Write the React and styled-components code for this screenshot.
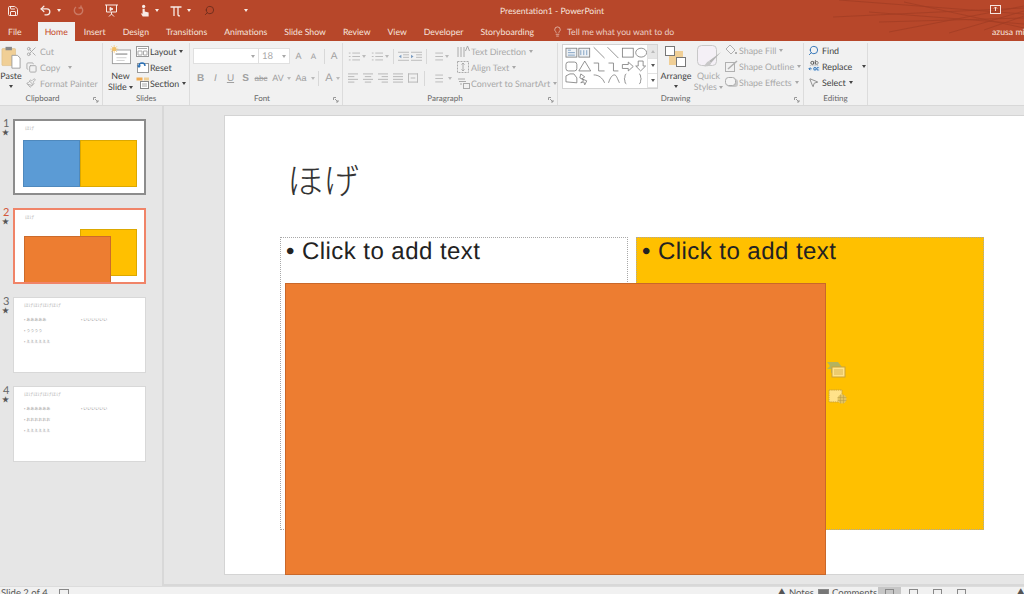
import React from 'react';
import styled, { createGlobalStyle } from 'styled-components';
import { Copy, Lightbulb, MousePointer2, Paintbrush, Save, Scissors, Search, Undo2 } from 'lucide-react';

const GlobalStyle = createGlobalStyle`
  html, body {
    margin: 0;
    width: 1024px;
    height: 594px;
    overflow: hidden;
    background: #e6e6e6;
    font-family: Lato, 'Noto Sans CJK JP', sans-serif;
    text-rendering: geometricPrecision;
  }
  * { box-sizing: border-box; }
`;

const Window = styled.div`
  width: 1024px;
  height: 594px;
  display: flex;
  flex-direction: column;
  overflow: hidden;
`;

// title bar + tabs
const Head = styled.div`
  position: relative;
  height: 41px;
  background: #b7472a;
  color: #f6e4de;
  flex: none;
`;

const Streaks = styled.svg`
  position: absolute;
  top: 0;
  right: 0;
`;

const TitleBar = styled.div`
  display: flex;
  align-items: center;
  height: 22px;
  padding: 0 0 1px 7px;
`;

const Qat = styled.div`
  display: flex;
  align-items: center;
  width: 493px;
  color: #f8ebe6;
`;

const QatSlot = styled.span`
  display: flex;
  align-items: center;
  width: ${(p) => p.$w}px;
  gap: 5px;
  color: ${(p) => p.$color || 'inherit'};
  opacity: ${(p) => (p.$off ? 0.3 : 1)};
`;

const Caret = styled.i`
  display: inline-block;
  flex: none;
  width: 0;
  height: 0;
  border-left: 2.5px solid transparent;
  border-right: 2.5px solid transparent;
  border-top: 3px solid currentColor;
  vertical-align: middle;
  margin-top: ${(p) => p.$top || 0}px;
`;

const DocTitle = styled.div`
  font-size: 8.6px;
  white-space: nowrap;
  flex: 1;
`;

const RestoreBtn = styled.svg`
  position: absolute;
  top: 4px;
  left: 990px;
`;

const Tabs = styled.div`
  display: flex;
  align-items: flex-end;
  height: 19px;
  padding-left: 8px;
  font-size: 8.7px;
  gap: 17px;
  white-space: nowrap;
`;

const Tab = styled.div`
  height: 19px;
  line-height: 20px;
  ${(p) => p.$active && `
    background: #f1f1f1;
    color: #c6492a;
    padding: 0 7px;
    margin: 0 -8px 0 -1px;
  `}
`;

const TellMe = styled.div`
  display: flex;
  align-items: center;
  gap: 4px;
  height: 19px;
  margin-left: 1px;
  color: #eccfc6;
`;

const User = styled.div`
  position: absolute;
  left: 992px;
  top: 22px;
  width: 32px;
  overflow: hidden;
  font-size: 8.7px;
  line-height: 20px;
  white-space: nowrap;
`;

// ribbon
const Ribbon = styled.div`
  display: flex;
  flex: none;
  height: 65px;
  background: #f1f1f1;
  border-bottom: 1px solid #d8d8d8;
  font-size: 8.9px;
  color: #a8a8a8;
  white-space: nowrap;
`;

const Group = styled.div`
  position: relative;
  flex: none;
  width: ${(p) => p.$w}px;
  display: flex;
  flex-direction: column;
  margin-top: 2px;
  border-right: 1px solid #dcdcdc;
`;

const GroupBody = styled.div`
  flex: 1;
  display: flex;
  padding-left: ${(p) => p.$pad || 0}px;
  gap: ${(p) => p.$gap || 0}px;
`;

const GroupLabel = styled.div`
  height: 13px;
  line-height: 13px;
  text-align: center;
  padding-right: ${(p) => p.$right || 0}px;
  font-size: 8px;
  color: #666;
`;

const Launcher = styled.svg`
  position: absolute;
  right: 3px;
  bottom: 2px;
`;

const BigButton = styled.div`
  width: ${(p) => p.$w}px;
  flex: none;
  display: flex;
  flex-direction: column;
  align-items: center;
  line-height: 11px;
  color: ${(p) => (p.$dim ? '#a8a8a8' : '#444')};
`;

const BigIcon = styled.div`
  height: ${(p) => p.$h}px;
  display: flex;
  align-items: flex-end;
  margin-bottom: 1px;
`;

const SmallCol = styled.div`
  display: flex;
  flex-direction: column;
  margin-top: ${(p) => p.$top ?? 0}px;
`;

const SmallBtn = styled.div`
  height: 16px;
  display: flex;
  align-items: center;
  gap: 3px;
  color: ${(p) => (p.$on ? '#444' : '#a8a8a8')};
`;

const IconBox = styled.span`
  width: 14px;
  margin-right: -3px;
  height: 14px;
  flex: none;
  display: flex;
  align-items: center;
  justify-content: flex-start;
`;

const FontCol = styled.div`
  display: flex;
  flex-direction: column;
  width: ${(p) => (p.$w ? `${p.$w}px` : 'auto')};
  flex: none;
  gap: 6px;
  padding-top: 5px;
`;

const Line = styled.div`
  display: flex;
  align-items: center;
  height: 16px;
  gap: ${(p) => p.$gap || 0}px;
`;

const Field = styled.div`
  width: ${(p) => p.$w}px;
  height: 16px;
  background: #fff;
  border: 1px solid #e0e0e0;
  display: flex;
  align-items: center;
  justify-content: space-between;
  padding: 0 3px;
  color: #a8a8a8;
  font-size: 9.5px;
`;

const Glyph = styled.span`
  width: ${(p) => p.$w}px;
  flex: none;
  text-align: center;
  font-size: ${(p) => p.$size || 10}px;
  font-weight: ${(p) => (p.$b ? 700 : 400)};
  font-style: ${(p) => (p.$i ? 'italic' : 'normal')};
  text-decoration: ${(p) => p.$deco || 'none'};
  color: #a0a0a0;
  font-family: 'Liberation Sans', sans-serif;
`;

const Sep = styled.span`
  width: 1px;
  height: 15px;
  flex: none;
  background: #d8d8d8;
  margin: 0 ${(p) => p.$m ?? 3}px;
`;

const Gallery = styled.div`
  display: flex;
  width: 96px;
  height: 45px;
  flex: none;
  margin-top: 1px;
  background: #fff;
  border: 1px solid #d2d2d2;
`;

const GalleryScroll = styled.div`
  width: 10px;
  margin-left: auto;
  display: flex;
  flex-direction: column;
  border-left: 1px solid #e2e2e2;
`;

const ScrollCell = styled.span`
  flex: 1;
  display: flex;
  align-items: center;
  justify-content: center;
  background: ${(p) => (p.$off ? '#e6e6e6' : '#fff')};
  color: ${(p) => (p.$off ? '#bbb' : '#555')};
  border-bottom: 1px solid #e2e2e2;
`;

// workspace
const Workspace = styled.div`
  flex: 1;
  min-height: 0;
  display: flex;
  background: #e6e6e6;
`;

const ThumbPane = styled.div`
  width: 164px;
  flex: none;
  border-right: 2px solid #d8d8d8;
  padding: 13px 0 0 3px;
  display: flex;
  flex-direction: column;
  gap: 13px;
`;

const ThumbRow = styled.div`
  display: flex;
`;

const ThumbMark = styled.div`
  width: 10px;
  flex: none;
  color: ${(p) => (p.$active ? '#d2573a' : '#666')};
  font-size: 11px;
  line-height: 9px;
  text-align: left;
`;

const Star = styled.div`
  font-size: 7px;
  line-height: 9px;
  margin: 1px 0 0 -1px;
  color: #555;
`;

const Thumb = styled.div`
  position: relative;
  width: 133px;
  height: 76px;
  background: #fff;
  border: ${(p) => p.$border};
  font-family: 'Noto Sans CJK JP', sans-serif;
  color: #aaa;
  overflow: hidden;
`;

const ThumbTitle = styled.div`
  position: absolute;
  left: 10px;
  top: 5px;
  font-size: 4.6px;
  line-height: 7px;
  color: #b5b5b5;
  white-space: nowrap;
`;

const ThumbText = styled.div`
  position: absolute;
  left: ${(p) => p.$x}px;
  top: ${(p) => p.$y}px;
  font-size: 4px;
  line-height: 6px;
  color: #9a9a9a;
  white-space: nowrap;
`;

const ThumbShape = styled.div`
  position: absolute;
  left: ${(p) => p.$x}px;
  top: ${(p) => p.$y}px;
  width: ${(p) => p.$w}px;
  height: ${(p) => p.$h}px;
  background: ${(p) => p.$bg};
  border: 1px solid ${(p) => p.$line};
`;

const Stage = styled.div`
  flex: 1;
  min-width: 0;
  height: 480px;
  padding: 9px 0 0 60px;
  border-bottom: 2px solid #d8d8d8;
  overflow: hidden;
`;

const Slide = styled.div`
  position: relative;
  width: 810px;
  height: 460px;
  background: #fff;
  border: 1px solid #d4d4d4;
`;

const SlideTitle = styled.div`
  position: absolute;
  left: 62px;
  top: 37px;
  font-family: 'Noto Sans CJK JP', sans-serif;
  font-weight: 300;
  font-size: 36px;
  line-height: 52px;
  color: #333;
`;

const Placeholder = styled.div`
  position: absolute;
  left: ${(p) => p.$x}px;
  top: 121px;
  width: 348px;
  height: 293px;
  background: ${(p) => p.$bg};
  border: 1px dotted #a8a8a8;
  padding-left: 5px;
  font-family: 'Liberation Sans', sans-serif;
  font-size: 24px;
  letter-spacing: 0.45px;
  line-height: 28px;
  color: #222;
  white-space: nowrap;
`;

const OrangeShape = styled.div`
  position: absolute;
  left: 60px;
  top: 167px;
  width: 541px;
  height: 292px;
  background: #ed7d31;
  border: 1px solid #c9682a;
`;

const ContentIcons = styled.svg`
  position: absolute;
  left: 601px;
  top: 245px;
`;

// status bar, only its top few pixels are in the window
const StatusBar = styled.div`
  flex: none;
  height: 8px;
  background: #f1f1f1;
  border-top: 1px solid #dcdcdc;
  display: flex;
  overflow: hidden;
  font-size: 9.5px;
  color: #555;
  white-space: nowrap;
`;

const StatusLeft = styled.div`
  display: flex;
  gap: 11px;
  padding-left: 1px;
  line-height: 14px;
  height: 14px;
`;

const StatusRight = styled.div`
  margin-left: auto;
  display: flex;
  align-items: flex-start;
`;

const StatusItem = styled.span`
  display: flex;
  align-items: flex-start;
  gap: 3px;
  width: ${(p) => p.$w}px;
  padding-left: ${(p) => p.$pad || 0}px;
  height: 8px;
  line-height: 14px;
  background: ${(p) => (p.$on ? '#c6c6c6' : 'transparent')};
`;

const MiniBox = styled.i`
  display: block;
  flex: none;
  width: ${(p) => p.$w}px;
  height: 8px;
  margin-top: 2px;
  border: 1px solid #888;
  background: ${(p) => p.$fill || 'transparent'};
`;

const PasteIcon = () => (
  <svg width="20" height="23" viewBox="0 0 22 27" preserveAspectRatio="none">
    <rect x="1" y="3" width="15" height="20" rx="1" fill="#f0cf96" stroke="#d9b679" strokeWidth="0.6" />
    <rect x="5" y="1" width="7" height="4" fill="#888" />
    <path d="M12 11h6l3 3v12h-9z" fill="#fff" stroke="#999" />
  </svg>
);

const NewSlideIcon = () => (
  <svg width="22" height="20" viewBox="0 0 24 22">
    <rect x="2.5" y="5.5" width="20" height="15" fill="#fff" stroke="#9a9a9a" />
    <path d="M6 9h13v2H6z" fill="#b5b5b5" />
    <path d="M7 14h11M7 17h9" stroke="#ccc" />
    <circle cx="4.5" cy="4.5" r="2.4" fill="#f2c067" />
    <path d="M4.5 0v9M0 4.5h9M1.3 1.3l6.4 6.4M7.7 1.3l-6.4 6.4" stroke="#f2c067" strokeWidth="0.7" />
  </svg>
);

const LayoutIcon = () => (
  <svg width="13" height="11" viewBox="0 0 13 11">
    <rect x="0.5" y="0.5" width="12" height="10" fill="#fff" stroke="#999" />
    <path d="M2 2.5h9M2 5h4v4H2zM7.5 5H11v4H7.5z" stroke="#aaa" fill="none" />
  </svg>
);

const ResetIcon = () => (
  <svg width="13" height="12" viewBox="0 0 13 12">
    <rect x="1.5" y="2.5" width="11" height="9" fill="#fff" stroke="#999" />
    <path d="M3 5a3 3 0 0 1 6 0" stroke="#2a6fb5" fill="none" strokeWidth="1.4" />
    <path d="M0.8 4.6h4.4L3 7z" fill="#2a6fb5" />
  </svg>
);

const SectionIcon = () => (
  <svg width="13" height="12" viewBox="0 0 13 12">
    <rect x="0.5" y="0.5" width="6" height="3" fill="#f0a94f" />
    <rect x="8" y="0.5" width="5" height="3" fill="#f0cf96" />
    <rect x="4.5" y="4.5" width="8" height="7" fill="#fff" stroke="#888" />
    <path d="M6 7h5M6 9h5" stroke="#aaa" />
  </svg>
);

const ListIcon = ({ bullets }) => (
  <svg width="12" height="11" viewBox="0 0 14 11" stroke="#b4b4b4" fill="none">
    {bullets && <path d="M1 1.5h2M1 5.5h2M1 9.5h2" />}
    <path d="M5 1.5h9M5 5.5h9M5 9.5h9" />
  </svg>
);

const IndentIcon = ({ flip }) => (
  <svg width="11" height="11" viewBox="0 0 13 11" fill="none" stroke="#b4b4b4">
    <path d="M0 .5h13M6 3.5h7M6 6.5h7M0 10h13" />
    <path d={flip ? 'M0 3.5l3 2-3 2z' : 'M4 3.5l-3 2 3 2z'} fill="#7a9cc2" stroke="none" />
  </svg>
);

const AlignIcon = ({ d }) => (
  <svg width="10" height="10" viewBox="0 0 11 10" fill="none" stroke="#b4b4b4">
    <path d={d} />
  </svg>
);

const GalleryShapes = () => (
  <svg width="85" height="43" viewBox="0 0 85 43" fill="none" stroke="#777" strokeWidth="0.8">
    <rect x="3" y="3" width="11" height="9" fill="#eef2f6" />
    <path d="M5 5h3M5 7.5h7M5 10h7" stroke="#6a90b8" />
    <rect x="16" y="3" width="11" height="9" fill="#eef2f6" />
    <path d="M18 5v5M21 5v5M24 5v5" stroke="#6a90b8" />
    <path d="M31 2l11 11M45 2l11 11" />
    <rect x="60" y="3" width="11" height="9" />
    <ellipse cx="79" cy="7.5" rx="5.5" ry="4.5" />
    <rect x="3" y="17" width="11" height="9" rx="2.5" />
    <path d="M22 16l6 10H16z" />
    <path d="M31 18h5v8h6M46 18h5v8h5" />
    <path d="M60 19.5h6V17l5 4.5-5 4.5v-2.5h-6z" />
    <path d="M76 16h5v5h2.5l-5 5-5-5H76z" />
    <path d="M3 37v-6l4-2h4l3 4v5z" />
    <path d="M18 29l4 3-3 2 5 2-2 4-1-3-3 1 3-3-4-2z" />
    <path d="M31 30c5 0 9 3 11 8M46 38c2-6 4-8 6-8s3 4 5 8" />
    <path d="M64 29c-2 0-1 4-2 5 1 1 0 5 2 5M77 29c2 0 1 4 2 5-1 1 0 5-2 5" />
  </svg>
);

const ArrangeIcon = () => (
  <svg width="24" height="24" viewBox="0 0 24 24">
    <rect x="9" y="6" width="10" height="9" fill="#f0cf96" />
    <rect x="5" y="11" width="9" height="9" fill="#f0cf96" />
    <rect x="1.5" y="1.5" width="9" height="9" fill="#fff" stroke="#777" />
    <rect x="12.5" y="12.5" width="9" height="9" fill="#fff" stroke="#777" />
  </svg>
);

const QuickStylesIcon = () => (
  <svg width="26" height="25" viewBox="0 0 26 25">
    <rect x="1.5" y="1.5" width="19" height="20" rx="4" fill="#f4f0f6" stroke="#c8c8c8" />
    <path d="M25 8L15 19l-2-2z" fill="#b5b5b5" />
    <path d="M13 17c-3 1-3 4-6 5 3 1 8 0 8-3z" fill="#c8c8c8" />
  </svg>
);

const FillIcon = () => (
  <svg width="12" height="12" viewBox="0 0 12 12" fill="none" stroke="#b0b0b0">
    <path d="M5 1l5 5-4 4-5-5z" fill="#f4f4f4" />
    <path d="M11 8v2" stroke="#999" strokeWidth="1.5" />
  </svg>
);

const OutlineIcon = () => (
  <svg width="13" height="12" viewBox="0 0 13 12" fill="none" stroke="#b0b0b0">
    <rect x="0.5" y="2.5" width="9" height="9" />
    <path d="M3 9l9-8" strokeWidth="1.5" />
  </svg>
);

const EffectsIcon = () => (
  <svg width="13" height="12" viewBox="0 0 13 12">
    <rect x="2" y="3" width="11" height="8" rx="3" fill="#c8c8c8" />
    <rect x="0.5" y="1.5" width="10" height="8" rx="3" fill="#f4f4f4" stroke="#aaa" />
  </svg>
);

const ReplaceIcon = () => (
  <svg width="13" height="14" viewBox="0 0 14 14">
    <path d="M2 6.5h10" stroke="#999" strokeWidth="0.7" strokeDasharray="1 1" />
    <path d="M1 10h3M2.5 8.5l-1.5 1.5 1.5 1.5" stroke="#2a6fb5" fill="none" />
    <rect x="5" y="7.5" width="8" height="5" fill="#dbe7f3" />
    <circle cx="7.5" cy="10" r="1.4" fill="none" stroke="#2a6fb5" />
    <path d="M11.5 8.7a1.4 1.4 0 1 0 0 2.6" fill="none" stroke="#2a6fb5" />
    <circle cx="4.6" cy="3.6" r="1.6" fill="none" stroke="#555" />
    <path d="M6.2 2v3.4M8 .5v5M8 3.6a1.5 1.5 0 1 1 0 .1" fill="none" stroke="#555" strokeWidth="0.8" />
  </svg>
);

const launcher = (
  <Launcher width="6" height="6" viewBox="0 0 6 6" fill="none" stroke="#999">
    <path d="M.5 3V.5H3M2 2l3 3M5 3v2H3" />
  </Launcher>
);

const thumbs = [
  {
    id: 1,
    border: '2px solid #8c8c8c',
    title: 'ほげ',
    shapes: [
      { x: 8, y: 19, w: 57, h: 47, bg: '#5b9bd5', line: '#4f89bd' },
      { x: 65, y: 19, w: 57, h: 47, bg: '#ffc000', line: '#dca800' },
    ],
  },
  {
    id: 2,
    active: true,
    border: '2px solid #f08468',
    title: 'ほげ',
    shapes: [
      { x: 65, y: 19, w: 57, h: 47, bg: '#ffc000', line: '#dca800' },
      { x: 9, y: 26, w: 87, h: 47, bg: '#ed7d31', line: '#cc6b2b' },
    ],
  },
  {
    id: 3,
    border: '1px solid #d8d8d8',
    title: 'ほげほげほげほげ',
    lines: [
      { x: 10, y: 19, t: '• あああああ' },
      { x: 67, y: 19, t: '• いいいいいい' },
      { x: 10, y: 30, t: '• うううう' },
      { x: 10, y: 41, t: '• ええええええ' },
    ],
  },
  {
    id: 4,
    border: '1px solid #d8d8d8',
    title: 'ほげほげほげほげ',
    lines: [
      { x: 10, y: 19, t: '• ああああああ' },
      { x: 67, y: 19, t: '• いいいいいい' },
      { x: 10, y: 30, t: '• おおおおおお' },
      { x: 10, y: 41, t: '• ええええええ' },
    ],
  },
];

const tabNames = ['Insert', 'Design', 'Transitions', 'Animations', 'Slide Show', 'Review', 'View', 'Developer', 'Storyboarding'];

export default function App() {
  return (
    <Window>
      <GlobalStyle />
      <Head>
        <Streaks width="270" height="41" viewBox="0 0 270 41" fill="none" stroke="#a23e24" strokeWidth="0.8">
          <path d="M85 0l185 14M79 17l191-9M125 22l145-4M135 32l135-26M115 12l155 12M195 33l75-22M230 30l40-14M150 2l120 26" />
        </Streaks>
        <TitleBar>
          <Qat>
            <QatSlot $w={32}><Save size={12} strokeWidth={2} /></QatSlot>
            <QatSlot $w={34}><Undo2 size={13} strokeWidth={2.4} /><Caret /></QatSlot>
            <QatSlot $w={32} $off>
              <svg width="11" height="11" viewBox="0 0 11 11" fill="none" stroke="currentColor" strokeWidth="1.4">
                <path d="M3 2a4.2 4.2 0 1 0 5 0M8 .5v2.5H5.5" />
              </svg>
            </QatSlot>
            <QatSlot $w={35}>
              <svg width="13" height="13" viewBox="0 0 13 13" fill="none" stroke="currentColor">
                <path d="M0 1h13M1.5 1v7h10V1M6.5 8v2M4 12.5l2.5-2.5L9 12.5" />
                <path d="M5 3.5l3 1.5-3 1.5z" fill="currentColor" />
              </svg>
            </QatSlot>
            <QatSlot $w={30}>
              <svg width="10" height="13" viewBox="0 0 11 13" fill="currentColor">
                <circle cx="4" cy="2" r="1.8" />
                <path d="M2.8 4.5h2.4v3l4.3 1.2V13H3L.8 9.5l2 .5z" />
              </svg>
              <Caret />
            </QatSlot>
            <QatSlot $w={34}>
              <svg width="12" height="12" viewBox="0 0 12 12" fill="none" stroke="currentColor" strokeWidth="1.3">
                <path d="M0.5 2h11M4 2v9M8 2v7.5c0 1 .7 1.5 2 1.3" />
              </svg>
              <Caret />
            </QatSlot>
            <QatSlot $w={40} $color="#6e2d1c">
              <Search size={11} strokeWidth={2} style={{ transform: 'scaleX(-1)' }} />
            </QatSlot>
            <QatSlot $w={5}><Caret /></QatSlot>
          </Qat>
          <DocTitle>Presentation1 - PowerPoint</DocTitle>
        </TitleBar>
        <RestoreBtn width="11" height="11" viewBox="0 0 11 11" fill="none" stroke="#f6e4de">
          <rect x="0.5" y="1.5" width="10" height="8" />
          <path d="M5.5 7V3M4 4.5l1.5-1.5L7 4.5" />
        </RestoreBtn>
        <Tabs>
          <Tab>File</Tab>
          <Tab $active>Home</Tab>
          {tabNames.map((name) => (
            <Tab key={name}>{name}</Tab>
          ))}
          <TellMe>
            <Lightbulb size={11} strokeWidth={1.6} />
            Tell me what you want to do
          </TellMe>
        </Tabs>
        <User>azusa mi</User>
      </Head>

      <Ribbon>
        <Group $w={103}>
          <GroupBody $gap={4}>
            <BigButton $w={22}>
              <BigIcon $h={26}><PasteIcon /></BigIcon>
              Paste
              <Caret $top={4} />
            </BigButton>
            <SmallCol>
              <SmallBtn><IconBox><Scissors size={11} /></IconBox>Cut</SmallBtn>
              <SmallBtn><IconBox><Copy size={11} /></IconBox>Copy&nbsp;&nbsp;<Caret /></SmallBtn>
              <SmallBtn><IconBox><Paintbrush size={10} /></IconBox>Format Painter</SmallBtn>
            </SmallCol>
          </GroupBody>
          <GroupLabel $right={17}>Clipboard</GroupLabel>
          {launcher}
        </Group>

        <Group $w={87}>
          <GroupBody $pad={5} $gap={3}>
            <BigButton $w={25}>
              <BigIcon $h={22}><NewSlideIcon /></BigIcon>
              <span style={{ marginTop: 4 }}>New</span>
              <span>Slide <Caret /></span>
            </BigButton>
            <SmallCol>
              <SmallBtn $on><IconBox><LayoutIcon /></IconBox>Layout <Caret /></SmallBtn>
              <SmallBtn $on><IconBox><ResetIcon /></IconBox>Reset</SmallBtn>
              <SmallBtn $on><IconBox><SectionIcon /></IconBox>Section <Caret /></SmallBtn>
            </SmallCol>
          </GroupBody>
          <GroupLabel>Slides</GroupLabel>
        </Group>

        <Group $w={153}>
          <GroupBody $pad={3}>
            <FontCol>
              <Line>
                <Field $w={66}><span /><Caret /></Field>
                <Field $w={32} style={{ marginLeft: -1 }}>18<Caret /></Field>
                <Glyph $w={15} $size={9} style={{ marginLeft: 1 }}>A</Glyph>
                <Glyph $w={15} $size={8}>A</Glyph>
                <Sep />
                <Glyph $w={12} $size={10}>A</Glyph>
              </Line>
              <Line>
                <Glyph $w={15} $b>B</Glyph>
                <Glyph $w={15} $i>I</Glyph>
                <Glyph $w={15} $deco="underline">U</Glyph>
                <Glyph $w={15} $b>S</Glyph>
                <Glyph $w={16} $size={8} $deco="line-through">abc</Glyph>
                <Glyph $w={18} $size={9}>AV</Glyph>
                <Caret style={{ color: '#bbb' }} />
                <Glyph $w={20} $size={9}>Aa</Glyph>
                <Caret style={{ color: '#bbb' }} />
                <Sep />
                <Glyph $w={14} $size={11}>A</Glyph>
                <Caret style={{ color: '#bbb' }} />
              </Line>
            </FontCol>
          </GroupBody>
          <GroupLabel $right={8}>Font</GroupLabel>
          {launcher}
        </Group>

        <Group $w={215}>
          <GroupBody $pad={5} $gap={2}>
            <FontCol $w={107}>
              <Line $gap={2}>
                <ListIcon bullets /><Caret style={{ color: '#bbb' }} />
                <span style={{ width: 1 }} />
                <ListIcon bullets /><Caret style={{ color: '#bbb' }} />
                <Sep $m={2} />
                <IndentIcon />
                <IndentIcon flip />
                <Sep $m={2} />
                <ListIcon /><Caret style={{ color: '#bbb' }} />
              </Line>
              <Line $gap={5}>
                <AlignIcon d="M0 .5h11M0 3.5h7M0 6.5h11M0 9.5h7" />
                <AlignIcon d="M0 .5h11M2 3.5h7M0 6.5h11M2 9.5h7" />
                <AlignIcon d="M0 .5h11M4 3.5h7M0 6.5h11M4 9.5h7" />
                <AlignIcon d="M0 .5h11M0 3.5h11M0 6.5h11M0 9.5h11" />
                <AlignIcon d="M0 .5h11M.5 0v10M10.5 0v10M0 9.5h11M3 5h5" />
                <Sep $m={1} />
                <ListIcon /><Caret style={{ color: '#bbb' }} />
              </Line>
            </FontCol>
            <SmallCol>
              <SmallBtn>
                <IconBox>
                  <svg width="13" height="13" viewBox="0 0 13 13" fill="none" stroke="#aaa"><path d="M1 2v10M4 2v10M7 2v10M10.5 1l-2 5M10.5 1l2 5" /></svg>
                </IconBox>
                Text Direction <Caret />
              </SmallBtn>
              <SmallBtn>
                <IconBox>
                  <svg width="12" height="12" viewBox="0 0 12 12" fill="none" stroke="#aaa"><rect x=".5" y=".5" width="11" height="11" strokeDasharray="2 1" /><path d="M6 2v8M4.5 3.5L6 2l1.5 1.5M4.5 8.5L6 10l1.5-1.5" /></svg>
                </IconBox>
                Align Text <Caret />
              </SmallBtn>
              <SmallBtn>
                <IconBox>
                  <svg width="13" height="11" viewBox="0 0 13 11" fill="none" stroke="#aaa"><path d="M1 1h7M2 3.5h7M3 6h2" /><rect x="6.5" y="5.5" width="6" height="5" /></svg>
                </IconBox>
                Convert to SmartArt <Caret />
              </SmallBtn>
            </SmallCol>
          </GroupBody>
          <GroupLabel $right={10}>Paragraph</GroupLabel>
          {launcher}
        </Group>

        <Group $w={246}>
          <GroupBody $pad={4} $gap={2}>
            <Gallery>
              <GalleryShapes />
              <GalleryScroll>
                <ScrollCell $off><Caret style={{ transform: 'rotate(180deg)' }} /></ScrollCell>
                <ScrollCell><Caret /></ScrollCell>
                <ScrollCell><Caret /></ScrollCell>
              </GalleryScroll>
            </Gallery>
            <BigButton $w={32}>
              <BigIcon $h={26}><ArrangeIcon /></BigIcon>
              <span>Arrange</span>
              <Caret $top={4} />
            </BigButton>
            <BigButton $w={29} $dim>
              <BigIcon $h={26}><QuickStylesIcon /></BigIcon>
              <span>Quick</span>
              <span>Styles <Caret /></span>
            </BigButton>
            <SmallCol $top={-1}>
              <SmallBtn><IconBox><FillIcon /></IconBox>Shape Fill <Caret /></SmallBtn>
              <SmallBtn><IconBox><OutlineIcon /></IconBox>Shape Outline <Caret /></SmallBtn>
              <SmallBtn><IconBox><EffectsIcon /></IconBox>Shape Effects <Caret /></SmallBtn>
            </SmallCol>
          </GroupBody>
          <GroupLabel $right={10}>Drawing</GroupLabel>
          {launcher}
        </Group>

        <Group $w={64}>
          <GroupBody $pad={4}>
            <SmallCol $top={-1}>
              <SmallBtn $on><IconBox><Search size={11} color="#2a6fb5" strokeWidth={2} style={{ transform: 'scaleX(-1)' }} /></IconBox>Find</SmallBtn>
              <SmallBtn $on><IconBox><ReplaceIcon /></IconBox>Replace&nbsp;&nbsp;&nbsp;<Caret /></SmallBtn>
              <SmallBtn $on><IconBox><MousePointer2 size={11} strokeWidth={1.2} /></IconBox>Select <Caret /></SmallBtn>
            </SmallCol>
          </GroupBody>
          <GroupLabel>Editing</GroupLabel>
        </Group>
      </Ribbon>

      <Workspace>
        <ThumbPane>
          {thumbs.map((t) => (
            <ThumbRow key={t.id}>
              <ThumbMark $active={t.active}>
                {t.id}
                <Star>★</Star>
              </ThumbMark>
              <Thumb $border={t.border}>
                <ThumbTitle>{t.title}</ThumbTitle>
                {t.shapes && t.shapes.map((s) => (
                  <ThumbShape key={s.bg} $x={s.x} $y={s.y} $w={s.w} $h={s.h} $bg={s.bg} $line={s.line} />
                ))}
                {t.lines && t.lines.map((l) => (
                  <ThumbText key={l.t} $x={l.x} $y={l.y}>{l.t}</ThumbText>
                ))}
              </Thumb>
            </ThumbRow>
          ))}
        </ThumbPane>

        <Stage>
          <Slide>
            <SlideTitle>ほげ</SlideTitle>
            <Placeholder $x={55} $bg="#fff">• Click to add text</Placeholder>
            <Placeholder $x={411} $bg="#ffc000">• Click to add text</Placeholder>
            <OrangeShape />
            <ContentIcons width="22" height="44" viewBox="0 0 22 44">
              <path d="M1 1h11l4 5-3 1v5H5V8H1l3-3z" fill="#b3b35f" />
              <rect x="6" y="6" width="13" height="10" fill="#ffe28a" stroke="#c9a23a" />
              <path d="M8 9h9M8 11h9M8 13h9" stroke="#c9a23a" strokeWidth="0.7" />
              <rect x="3" y="29" width="13" height="12" fill="#ffe28a" stroke="#c9a23a" strokeDasharray="1.5 .7" />
              <circle cx="16" cy="38" r="4.5" fill="#e2c25f" />
              <path d="M11.5 36.5h9M11.5 39.5h9M14.5 33.5v9M17.5 33.5v9" stroke="#b79a4a" strokeWidth="0.5" />
            </ContentIcons>
          </Slide>
        </Stage>
      </Workspace>

      <StatusBar>
        <StatusLeft>
          <span>Slide 2 of 4</span>
          <MiniBox $w={10} />
        </StatusLeft>
        <StatusRight>
          <StatusItem $w={41}>▲ Notes</StatusItem>
          <StatusItem $w={60}><MiniBox $w={11} $fill="#777" />Comments</StatusItem>
          <StatusItem $w={23} $on $pad={7}><MiniBox $w={9} /></StatusItem>
          <StatusItem $w={24} $pad={8}><MiniBox $w={9} /></StatusItem>
          <StatusItem $w={24} $pad={8}><MiniBox $w={9} /></StatusItem>
          <StatusItem $w={67} $pad={8}><MiniBox $w={9} /></StatusItem>
          <StatusItem $w={8}>▲</StatusItem>
        </StatusRight>
      </StatusBar>
    </Window>
  );
}
